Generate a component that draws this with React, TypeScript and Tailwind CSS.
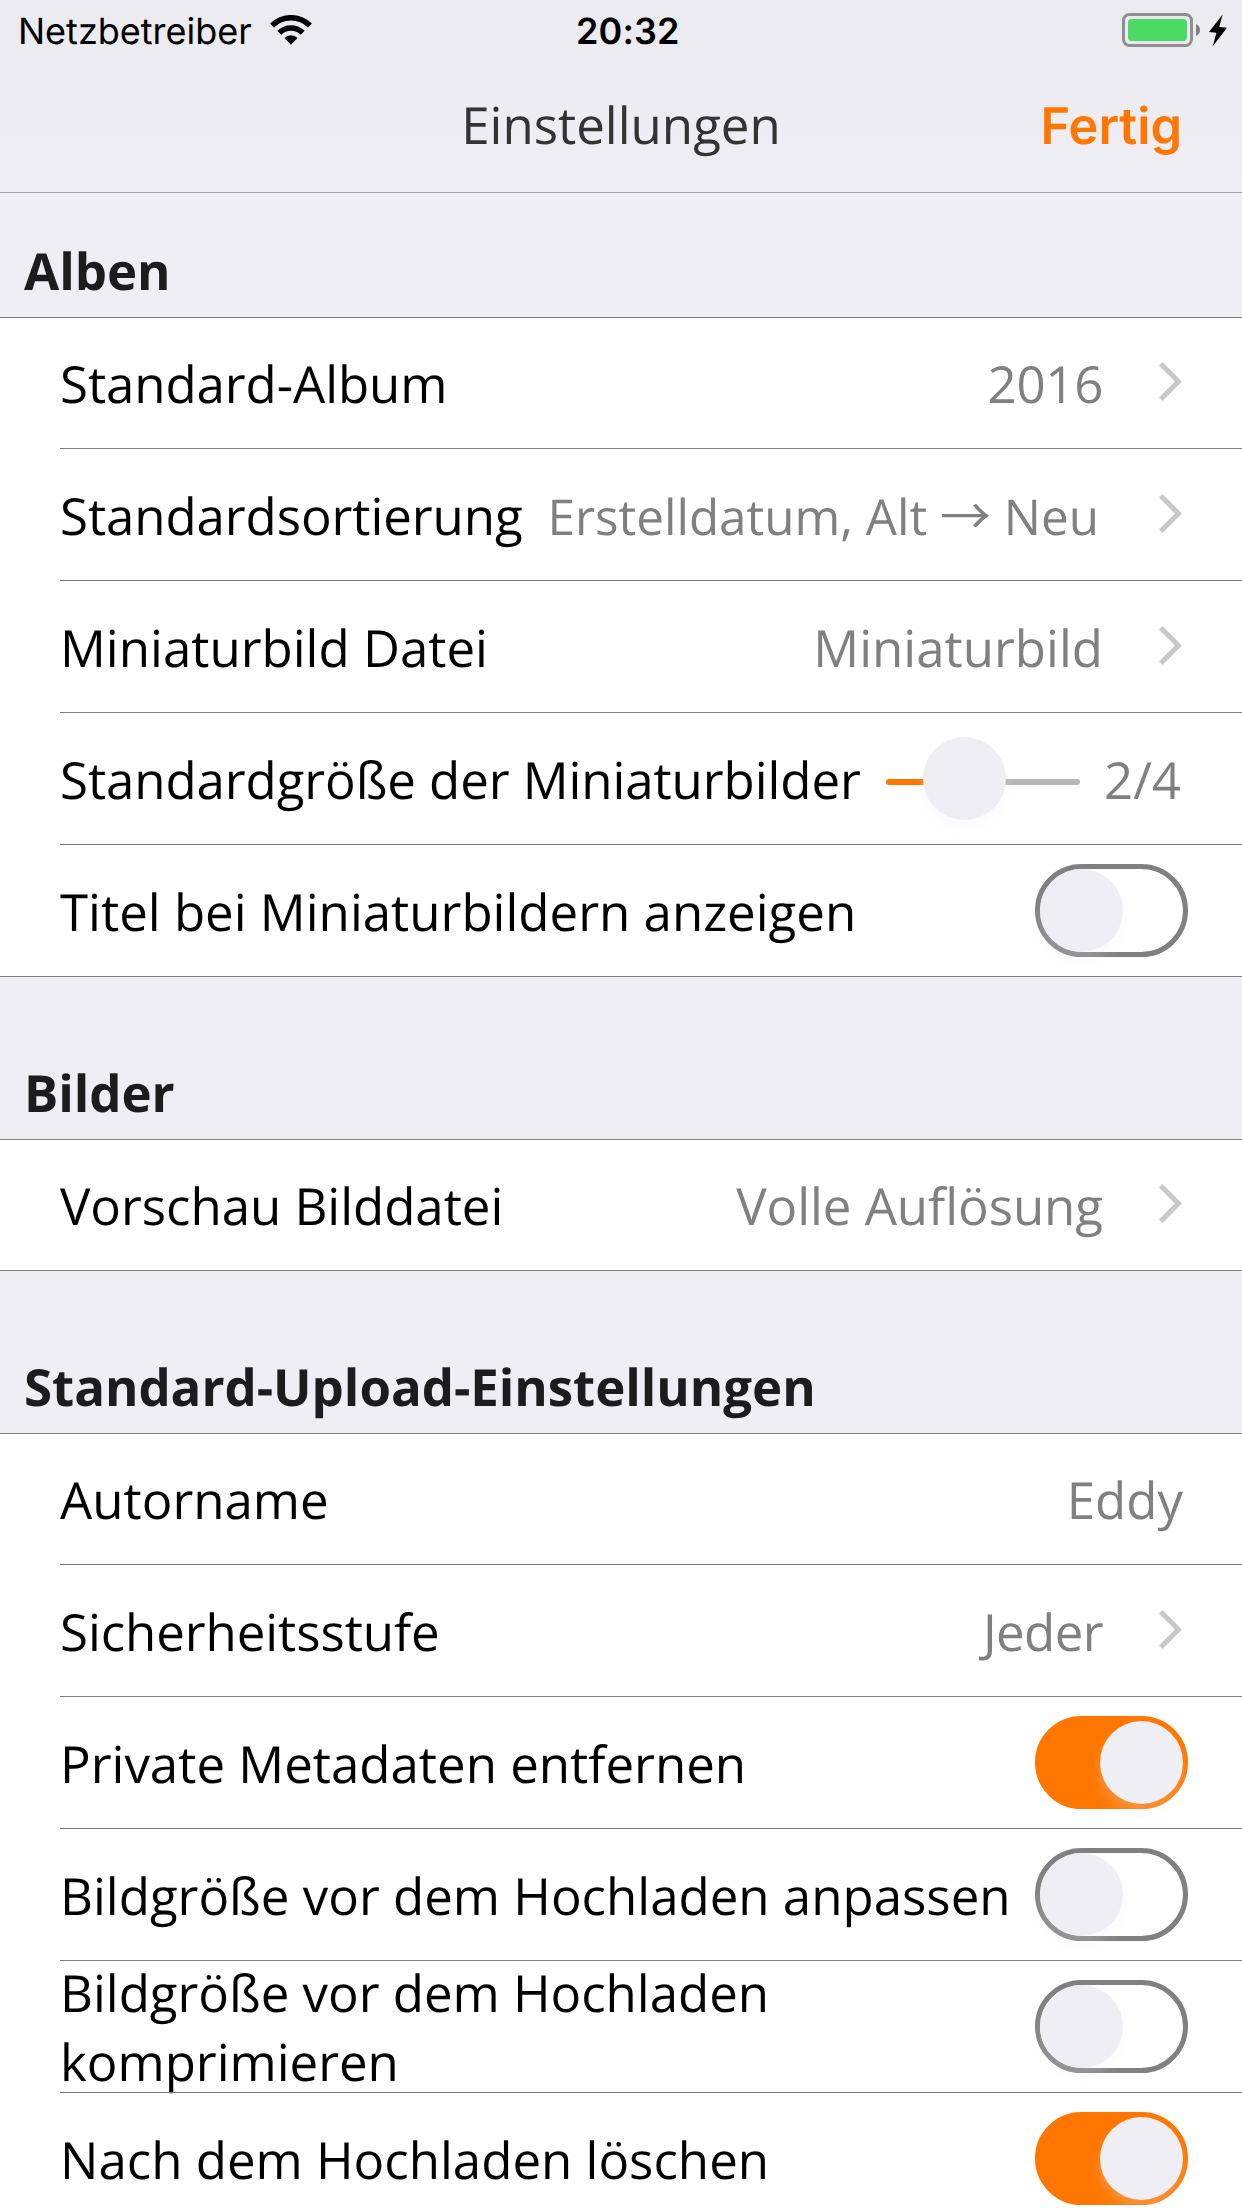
import React from "react";

const Chevron = () => (
  <svg className="ml-[56px] mr-[60px] mb-[3px] h-[39px] w-[23px] shrink-0" viewBox="0 0 23 39" fill="none" stroke="#c7c7cc" strokeWidth="5">
    <path d="M1.8 1.8 L19.4 19.5 L1.8 37.2" />
  </svg>
);

const Thumb = ({ className = "" }: { className?: string }) => (
  <div className={"h-[83px] w-[83px] shrink-0 rounded-full bg-[#efeef4] shadow-[0_9px_12px_rgba(239,238,244,0.22)] " + className} />
);

const Switch = ({ on = false }: { on?: boolean }) => (
  <div
    className={
      "mr-[54px] mb-px flex h-[93px] w-[153px] shrink-0 items-center rounded-full border-[5px] " +
      (on ? "justify-end border-[#ff7700] bg-[#ff7700]" : "justify-start border-[#808080] bg-white")
    }
  >
    <Thumb />
  </div>
);

const Slider = () => (
  <div className="mb-px flex w-[194px] shrink-0 items-center">
    <div className="mt-[7px] h-[6px] w-[40px] rounded-l-full bg-[#ff7700]" />
    <Thumb className="z-10 -ml-[3px] -mr-[3px]" />
    <div className="mt-[7px] h-[6px] flex-1 rounded-r-full bg-[#b6b6b6]" />
  </div>
);

type RowProps = {
  label: string;
  labelClass?: string;
  value?: React.ReactNode;
  valueClass?: string;
  chevron?: boolean;
  first?: boolean;
  last?: boolean;
  children?: React.ReactNode;
};

const Row = ({ label, labelClass = "", value, valueClass = "text-[51px]", chevron, first, last, children }: RowProps) => (
  <div className={"relative flex items-center justify-between pl-[60px] " + (first ? "h-[131px] pb-px" : "h-[132px]")}>
    <div className={"max-w-[960px] text-[51px] leading-[69px] text-black " + labelClass}>{label}</div>
    <div className="flex shrink-0 items-center">
      {value !== undefined && children}
      {value !== undefined && (
        <div className={"whitespace-nowrap leading-[70px] text-[#808080] " + valueClass}>{value}</div>
      )}
      {chevron && <Chevron />}
      {value === undefined && children}
    </div>
    <div className={"absolute bottom-0 right-0 h-px bg-[#808080] " + (last ? "left-0" : "left-[60px]")} />
  </div>
);

const Header = ({ children, className }: { children: React.ReactNode; className: string }) => (
  <div className={"flex items-end border-b border-[#808080] pb-[12px] pl-[24px] text-[51px] font-bold leading-[70px] tracking-[-0.04px] text-[#1c1c1e] " + className}>
    {children}
  </div>
);

const Wifi = () => (
  <svg className="ml-[18px] mb-[2px] h-[30px] w-[42px]" viewBox="0 0 42 30" fill="none" stroke="#000" strokeWidth="5.6">
    <path d="M2.1 10.6 A26.7 26.7 0 0 1 39.9 10.6" />
    <path d="M9.3 17.8 A16.5 16.5 0 0 1 32.7 17.8" />
    <path d="M21 29.8 L14.5 23 A9.3 9.3 0 0 1 27.5 23 Z" fill="#000" stroke="none" />
  </svg>
);

const Battery = () => (
  <svg className="mb-[2px] h-[36px] w-[106px]" viewBox="0 0 106 36" fill="none">
    <rect x="1.5" y="2.5" width="68" height="31" rx="6" stroke="#8e8e93" strokeWidth="3" />
    <rect x="6" y="7" width="59" height="22" rx="3.5" fill="#4cd964" />
    <path d="M74 12 Q78 14 78 18 Q78 22 74 24 Z" fill="#808080" />
    <path d="M100.6 2.5 L87 20 L94.5 20.7 L90.6 34.5 L105 15.7 L97.2 15 Z" fill="#000" />
  </svg>
);

export default function App() {
  return (
    <div className="h-[2208px] w-[1242px] overflow-hidden bg-[#efeef4] font-['Open_Sans',sans-serif] [text-rendering:geometricPrecision]">
      <div className="h-[193px] border-b border-[#a2a2a6] bg-linear-to-b from-[#ebeaef] to-[#efeef4]">
        <div className="flex h-[62px] items-center pr-[14px] font-['Inter',sans-serif] text-[36px] text-black">
          <div className="flex w-[576px] items-center pl-[18px]">
            <span>Netzbetreiber</span>
            <Wifi />
          </div>
          <div className="flex-1 font-semibold tracking-[0.1px]">20:32</div>
          <Battery />
        </div>
        <div className="grid grid-cols-3 items-baseline pt-[27px] leading-[70px]">
          <div />
          <div className="text-center text-[51px] text-[#333]">Einstellungen</div>
          <div className="pr-[60px] text-right font-['Inter',sans-serif] text-[50.5px] font-semibold text-[#ff7700]">Fertig</div>
        </div>
      </div>
      <Header className="h-[125px]">Alben</Header>
      <div className="bg-white">
        <Row label="Standard-Album" labelClass="tracking-[-0.08px]" value="2016" valueClass="text-[51px] tracking-[-0.3px]" chevron first />
        <Row
          label="Standardsortierung"
          labelClass="tracking-[-0.08px]"
          value={<>Erstelldatum, Alt <span className="font-['Noto_Sans_CJK_JP'] text-[51px] leading-[0]">→</span> Neu</>}
          valueClass="mr-[4px] pt-[3px] text-[49.4px]"
          chevron
        />
        <Row label="Miniaturbild Datei" value="Miniaturbild" chevron />
        <Row label="Standardgröße der Miniaturbilder" labelClass="tracking-[-0.08px]" value="2/4" valueClass="mr-[61px] w-[101px] text-right text-[51px]">
          <Slider />
        </Row>
        <Row label="Titel bei Miniaturbildern anzeigen" last>
          <Switch />
        </Row>
      </div>
      <Header className="h-[163px]">Bilder</Header>
      <div className="bg-white">
        <Row label="Vorschau Bilddatei" labelClass="tracking-[-0.04px]" value="Volle Auflösung" valueClass="text-[51px] tracking-[-0.05px]" chevron first last />
      </div>
      <Header className="h-[163px]">Standard-Upload-Einstellungen</Header>
      <div className="bg-white">
        <Row label="Autorname" value="Eddy" valueClass="mr-[59px] text-[51px]" first />
        <Row label="Sicherheitsstufe" labelClass="tracking-[-0.08px]" value="Jeder" valueClass="text-[51px] tracking-[-0.6px]" chevron />
        <Row label="Private Metadaten entfernen">
          <Switch on />
        </Row>
        <Row label="Bildgröße vor dem Hochladen anpassen">
          <Switch />
        </Row>
        <Row label="Bildgröße vor dem Hochladen komprimieren" labelClass="tracking-[-0.02px]">
          <Switch />
        </Row>
        <Row label="Nach dem Hochladen löschen">
          <Switch on />
        </Row>
      </div>
    </div>
  );
}
